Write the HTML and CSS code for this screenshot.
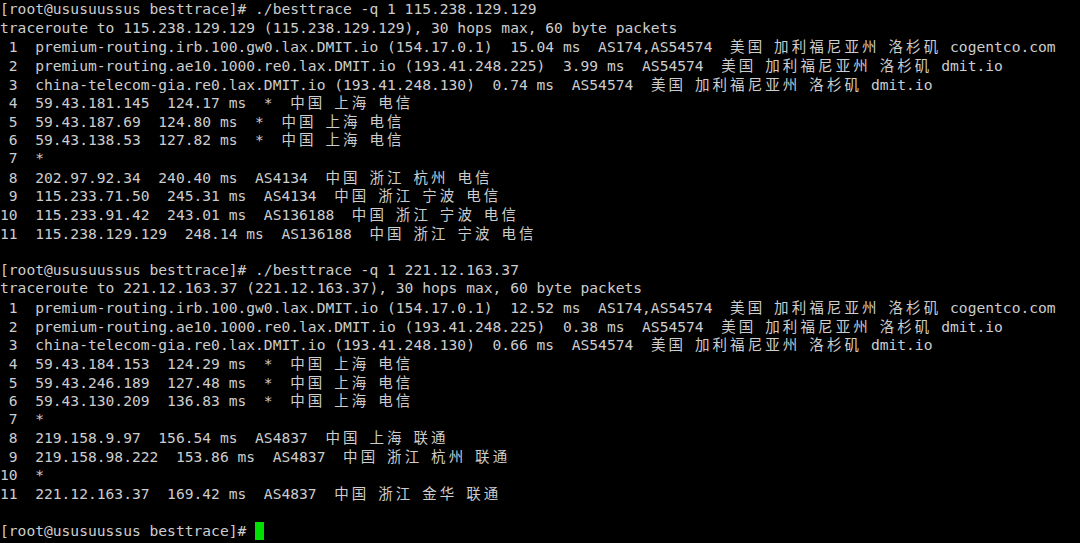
FILE: index.html
```html
<!DOCTYPE html>
<html>
<head>
<meta charset="utf-8">
<link rel="stylesheet" href="styles.css">
</head>
<body>
<div class="term">
<div class="ln">[root@ususuussus besttrace]# ./besttrace -q 1 115.238.129.129</div>
<div class="ln">traceroute to 115.238.129.129 (115.238.129.129), 30 hops max, 60 byte packets</div>
<div class="ln"> 1  premium-routing.irb.100.gw0.lax.DMIT.io (154.17.0.1)  15.04 ms  AS174,AS54574  <span class="c">美国</span> <span class="c">加利福尼亚州</span> <span class="c">洛杉矶</span> cogentco.com</div>
<div class="ln"> 2  premium-routing.ae10.1000.re0.lax.DMIT.io (193.41.248.225)  3.99 ms  AS54574  <span class="c">美国</span> <span class="c">加利福尼亚州</span> <span class="c">洛杉矶</span> dmit.io</div>
<div class="ln"> 3  china-telecom-gia.re0.lax.DMIT.io (193.41.248.130)  0.74 ms  AS54574  <span class="c">美国</span> <span class="c">加利福尼亚州</span> <span class="c">洛杉矶</span> dmit.io</div>
<div class="ln"> 4  59.43.181.145  124.17 ms  *  <span class="c">中国</span> <span class="c">上海</span> <span class="c">电信</span></div>
<div class="ln"> 5  59.43.187.69  124.80 ms  *  <span class="c">中国</span> <span class="c">上海</span> <span class="c">电信</span></div>
<div class="ln"> 6  59.43.138.53  127.82 ms  *  <span class="c">中国</span> <span class="c">上海</span> <span class="c">电信</span></div>
<div class="ln"> 7  *</div>
<div class="ln"> 8  202.97.92.34  240.40 ms  AS4134  <span class="c">中国</span> <span class="c">浙江</span> <span class="c">杭州</span> <span class="c">电信</span></div>
<div class="ln"> 9  115.233.71.50  245.31 ms  AS4134  <span class="c">中国</span> <span class="c">浙江</span> <span class="c">宁波</span> <span class="c">电信</span></div>
<div class="ln">10  115.233.91.42  243.01 ms  AS136188  <span class="c">中国</span> <span class="c">浙江</span> <span class="c">宁波</span> <span class="c">电信</span></div>
<div class="ln">11  115.238.129.129  248.14 ms  AS136188  <span class="c">中国</span> <span class="c">浙江</span> <span class="c">宁波</span> <span class="c">电信</span></div>
<div class="ln"> </div>
<div class="ln">[root@ususuussus besttrace]# ./besttrace -q 1 221.12.163.37</div>
<div class="ln">traceroute to 221.12.163.37 (221.12.163.37), 30 hops max, 60 byte packets</div>
<div class="ln"> 1  premium-routing.irb.100.gw0.lax.DMIT.io (154.17.0.1)  12.52 ms  AS174,AS54574  <span class="c">美国</span> <span class="c">加利福尼亚州</span> <span class="c">洛杉矶</span> cogentco.com</div>
<div class="ln"> 2  premium-routing.ae10.1000.re0.lax.DMIT.io (193.41.248.225)  0.38 ms  AS54574  <span class="c">美国</span> <span class="c">加利福尼亚州</span> <span class="c">洛杉矶</span> dmit.io</div>
<div class="ln"> 3  china-telecom-gia.re0.lax.DMIT.io (193.41.248.130)  0.66 ms  AS54574  <span class="c">美国</span> <span class="c">加利福尼亚州</span> <span class="c">洛杉矶</span> dmit.io</div>
<div class="ln"> 4  59.43.184.153  124.29 ms  *  <span class="c">中国</span> <span class="c">上海</span> <span class="c">电信</span></div>
<div class="ln"> 5  59.43.246.189  127.48 ms  *  <span class="c">中国</span> <span class="c">上海</span> <span class="c">电信</span></div>
<div class="ln"> 6  59.43.130.209  136.83 ms  *  <span class="c">中国</span> <span class="c">上海</span> <span class="c">电信</span></div>
<div class="ln"> 7  *</div>
<div class="ln"> 8  219.158.9.97  156.54 ms  AS4837  <span class="c">中国</span> <span class="c">上海</span> <span class="c">联通</span></div>
<div class="ln"> 9  219.158.98.222  153.86 ms  AS4837  <span class="c">中国</span> <span class="c">浙江</span> <span class="c">杭州</span> <span class="c">联通</span></div>
<div class="ln">10  *</div>
<div class="ln">11  221.12.163.37  169.42 ms  AS4837  <span class="c">中国</span> <span class="c">浙江</span> <span class="c">金华</span> <span class="c">联通</span></div>
<div class="ln"> </div>
<div class="ln">[root@ususuussus besttrace]# <span class="cursor"> </span></div>
</div>
</body>
</html>
```

FILE: styles.css
```css
html, body {
  margin: 0;
  padding: 0;
  background: #000;
}
.term {
  width: 1080px;
  height: 543px;
  overflow: hidden;
  background: #000;
  color: #cdcdcd;
  font-family: "DejaVu Sans Mono", monospace;
  font-size: 14.62px;
  line-height: 18.64px;
}
.ln {
  white-space: pre;
  height: 18.64px;
}
.c {
  font-family: "Noto Sans CJK SC", sans-serif;
  font-size: 14.5px;
  letter-spacing: 3.1px;
}
.cursor {
  display: inline-block;
  width: 8.8px;
  height: 18px;
  background: #00e000;
  vertical-align: top;
}
```
